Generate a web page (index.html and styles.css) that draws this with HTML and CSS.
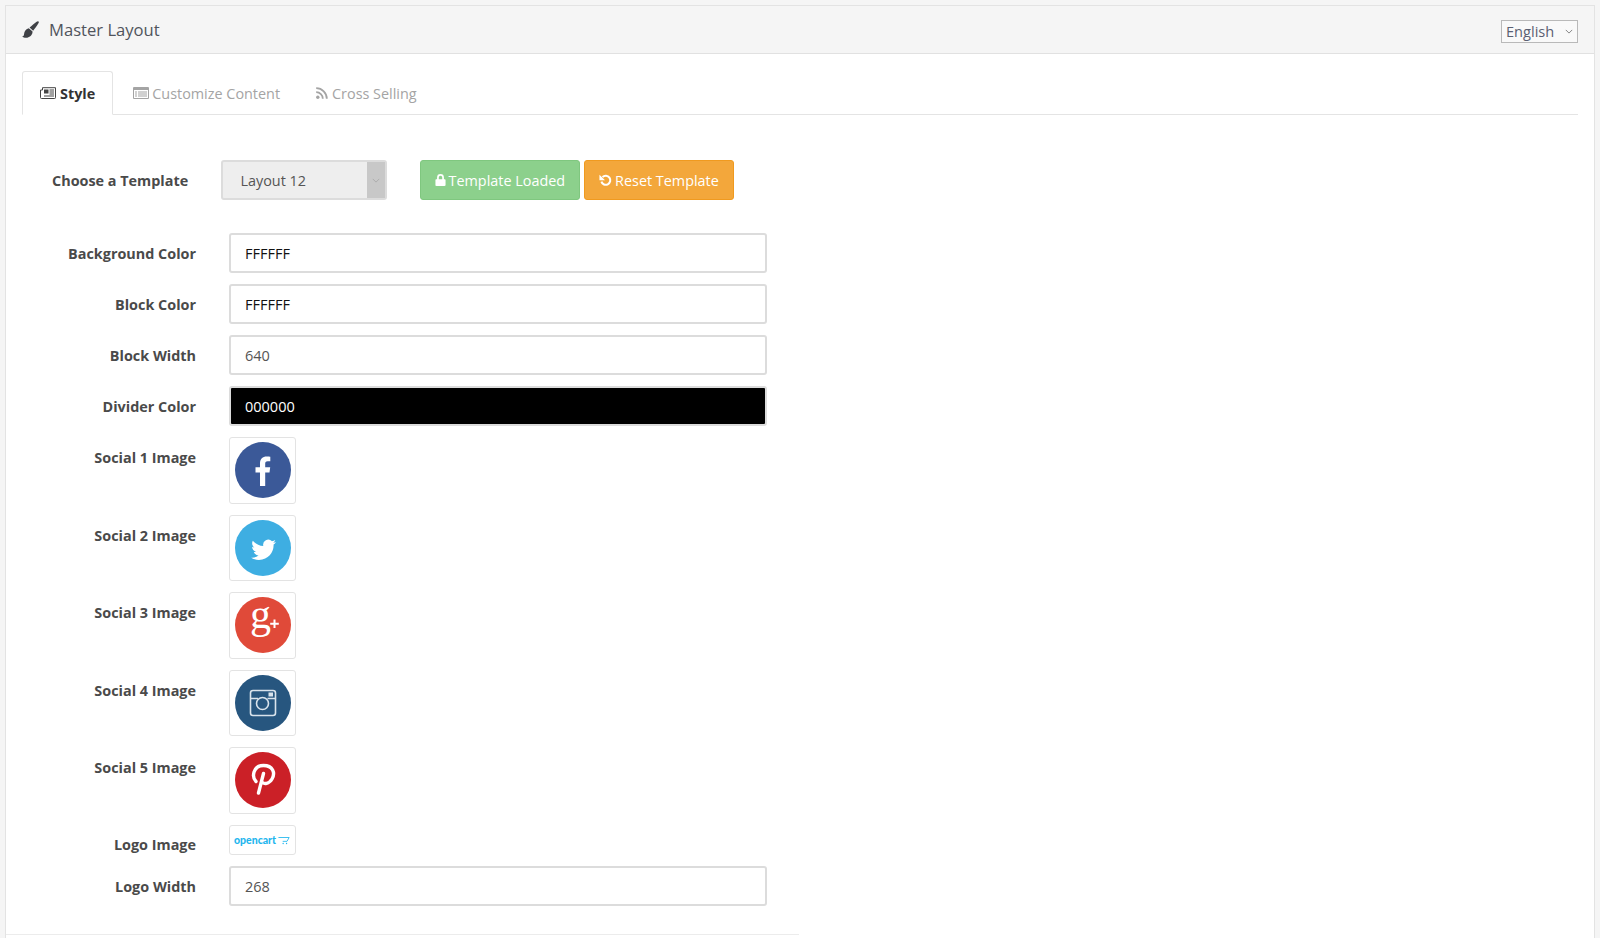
FILE: index.html
```html
<!DOCTYPE html>
<html lang="en">
<head>
<meta charset="utf-8">
<title>Master Layout</title>
<link rel="stylesheet" href="styles.css">
</head>
<body>
<div class="panel">
  <header class="panel-head">
    <h1 class="panel-title">
      <svg class="brush" viewBox="0 0 18 18"><path d="M17.500.5c.5.5.4 1.200-.1 2C15.800 5 13.500 8.500 11.800 10.300L8 7C10 5 13.500 2.200 15.500.7c.8-.5 1.500-.7 2-.2zM7.200 7.700l4 3.500c0 3.200-2.300 5.900-5.600 6.500-2 .3-4.100 0-5.500-1.200 1.500-.5 2-1.200 2.100-2.700.2-3 2.300-5.500 5-6.100z"/></svg>
      Master Layout
    </h1>
    <div class="lang">English<svg class="chev" viewBox="0 0 10 6"><path d="M1 1l4 4 4-4"/></svg></div>
  </header>
  <div class="panel-body">
    <nav class="tabs">
      <div class="tab active">
        <svg class="ti" viewBox="0 0 16 12"><path class="ol" d="M2.500.700h13v10a.800.800 0 0 1-.800.800H1.500a1 1 0 0 1-1-1V3h2z"/><path class="fl" d="M4 2.500h4.500v4H4zM9.500 2.500H14v1H9.500zM9.500 4.500H14v1H9.500zM9.500 6.500H14v1H9.500zM4 8.500h10v1H4z"/></svg>
        Style
      </div>
      <div class="tab">
        <svg class="ti" viewBox="0 0 16 12"><path class="fl" d="M1 0h14a1 1 0 0 1 1 1v10a1 1 0 0 1-1 1H1a1 1 0 0 1-1-1V1a1 1 0 0 1 1-1zm0 3v8h14V3zM2 4.500h2v1H2zM5 4.500h9v1H5zM2 6.500h2v1H2zM5 6.500h9v1H5zM2 8.500h2v1H2zM5 8.500h9v1H5z"/></svg>
        Customize Content
      </div>
      <div class="tab">
        <svg class="ti rss" viewBox="0 0 12 12"><circle class="fl" cx="1.800" cy="10.200" r="1.700"/><path class="arc" d="M.2 5.200a6.500 6.500 0 0 1 6.600 6.600M.2 1.200a10.500 10.500 0 0 1 10.600 10.600"/></svg>
        Cross Selling
      </div>
    </nav>

    <div class="template-row">
      <label class="template-label">Choose a Template</label>
      <div class="select">
        <span class="select-val">Layout 12</span>
        <span class="select-arrow"><svg class="chev" viewBox="0 0 10 6"><path d="M1 1l4 4 4-4"/></svg></span>
      </div>
      <div class="btns">
        <div class="btn green">
          <svg class="bi" viewBox="0 0 12 14"><path d="M2 6V4a4 4 0 0 1 8 0v2h.800c.600 0 1.100.500 1.100 1.100v5.800c0 .600-.500 1.100-1.100 1.100H1.200C.600 14 .100 13.500.100 12.900V7.100C.100 6.500.600 6 1.200 6zm2 0h4V4a2 2 0 0 0-4 0z"/></svg>
          Template Loaded
        </div>
        <div class="btn orange">
          <svg class="bi undo" viewBox="0 0 14 14"><path d="M2.600 8.200A4.900 4.900 0 1 0 3.800 3.300"/><path class="solid" d="M.5.800v6h6z"/></svg>
          Reset Template
        </div>
      </div>
    </div>

    <div class="fields">
      <div class="row"><label>Background Color</label><div class="input dark">FFFFFF</div></div>
      <div class="row"><label>Block Color</label><div class="input dark">FFFFFF</div></div>
      <div class="row"><label>Block Width</label><div class="input">640</div></div>
      <div class="row"><label>Divider Color</label><div class="input black">000000</div></div>

      <div class="row"><label>Social 1 Image</label>
        <div class="thumb"><svg viewBox="0 0 56 56"><circle cx="28" cy="28" r="28" fill="#3b5998"/><path fill="#fff" d="M25 44V30.500h-4.500v-5.300H25v-3.700c0-4.500 2.700-7 6.700-7 1.800 0 3.200.1 3.600.2v4.500h-2.600c-2.100 0-2.500 1-2.500 2.500v3.500h5l-.7 5.300h-4.300V44z"/></svg></div>
      </div>
      <div class="row"><label>Social 2 Image</label>
        <div class="thumb"><svg viewBox="0 0 56 56"><circle cx="28" cy="28" r="28" fill="#3eaee2"/><path transform="translate(4 5.600) scale(.88)" fill="#fff" d="M42 18.500c-1 .5-2.100.8-3.300 1 1.200-.7 2.100-1.800 2.500-3.100-1.100.7-2.400 1.100-3.700 1.400a5.800 5.800 0 0 0-9.900 5.300c-4.800-.2-9-2.500-11.900-6-1.500 2.700-.7 6 1.800 7.700-.9 0-1.800-.3-2.600-.7 0 2.800 2 5.200 4.600 5.700-.8.200-1.700.3-2.600.1.700 2.300 2.900 4 5.400 4-2.500 2-5.600 2.800-8.500 2.500 2.600 1.700 5.700 2.600 8.900 2.600 10.900 0 17-9.200 16.600-17.400 1.100-.8 2.100-1.800 2.700-3.100z"/></svg></div>
      </div>
      <div class="row"><label>Social 3 Image</label>
        <div class="thumb"><svg viewBox="0 0 56 56"><circle cx="28" cy="28" r="28" fill="#e04a39"/><text class="gplus" x="15" y="31">g</text><path fill="#fff" d="M38.500 22.500h2v3.300h3.300v2h-3.300v3.300h-2v-3.300h-3.300v-2h3.300z"/></svg></div>
      </div>
      <div class="row"><label>Social 4 Image</label>
        <div class="thumb"><svg viewBox="0 0 56 56"><circle cx="28" cy="28" r="28" fill="#27567f"/><g fill="none" stroke="#d9e3ec" stroke-width="1.600"><rect x="15.500" y="15.500" width="25" height="25" rx="2.500"/><circle cx="27.500" cy="28.500" r="6"/><path d="M16 23.500h7M32.500 23.500H40"/></g><rect x="33.500" y="17.500" width="4.500" height="4" fill="#d9e3ec"/></svg></div>
      </div>
      <div class="row"><label>Social 5 Image</label>
        <div class="thumb"><svg viewBox="0 0 56 56"><circle cx="28" cy="28" r="28" fill="#cb2027"/><path fill="none" stroke="#fff" stroke-width="3.400" stroke-linecap="round" d="M21 29.500C16.500 25 18 13.500 28.500 13.500 38 13.500 40.500 21 37 27c-3 5-8 5.500-10 3M28.500 21.500L23.500 41"/></svg></div>
      </div>
      <div class="row logo-row"><label>Logo Image</label>
        <div class="thumb logo"><span class="logo-word">opencart</span><svg class="cart" viewBox="0 0 14 9"><path d="M.5 1h12.500l-2.500 4.500H5.500"/><circle cx="6" cy="8" r=".8"/><circle cx="10" cy="8" r=".8"/></svg></div>
      </div>
      <div class="row"><label>Logo Width</label><div class="input">268</div></div>
    </div>
    <div class="foot-rule"></div>
  </div>
</div>
</body>
</html>
```

FILE: styles.css
```css
* { box-sizing: border-box; }
html, body { height: 100%; }
body {
  margin: 0;
  padding: 5px 5px 0;
  background: #f5f5f5;
  font-family: "Open Sans", "Liberation Sans", sans-serif;
  font-size: 15px;
  color: #555;
  overflow: hidden;
}
.panel {
  background: #fff;
  border: 1px solid #e3e3e3;
  border-bottom: 0;
  height: 933px;
}
.panel-head {
  height: 48px;
  background: #f5f5f5;
  border-bottom: 1px solid #e1e1e1;
  display: flex;
  align-items: center;
  justify-content: space-between;
  padding: 0 16px;
}
.panel-title {
  margin: 0;
  display: flex;
  align-items: center;
  gap: 10px;
  font-size: 16.600px;
  font-weight: 400;
  color: #50545c;
}
.brush { width: 17px; height: 17px; fill: #3f4146; }
.lang {
  width: 77px;
  height: 23px;
  margin-top: 3px;
  border: 1px solid #b9b9b9;
  background: #f9f9f9;
  display: flex;
  align-items: center;
  justify-content: space-between;
  padding: 0 4px;
  font-size: 14.600px;
  color: #5a6072;
}
.chev { width: 8px; height: 5px; fill: none; stroke: #777; stroke-width: 1.100; }
.panel-body { padding: 17px 16px 0; }
.tabs {
  display: flex;
  height: 44px;
  border-bottom: 1px solid #e4e4e4;
}
.tab {
  display: flex;
  align-items: center;
  gap: 3px;
  height: 44px;
  padding: 0 18px;
  color: #a4a4a4;
  font-size: 14.400px;
}
.tab.active {
  background: #fff;
  border: 1px solid #e4e4e4;
  border-bottom-color: #fff;
  border-radius: 3px 3px 0 0;
  color: #333;
  font-weight: 700;
  gap: 4px;
  padding: 0 16.500px 0 17px;
  margin-right: 2.500px;
}
.ti { width: 16px; height: 12px; }
.ti.rss { width: 12px; height: 12px; }
.tab:last-child { gap: 4px; }
.ti .fl { fill: #a4a4a4; }
.ti .arc { fill: none; stroke: #a4a4a4; stroke-width: 1.800; }
.tab.active .fl { fill: #444; }
.ti .ol { fill: none; stroke: #444; stroke-width: 1; }

.template-row {
  display: flex;
  align-items: center;
  margin-top: 45px;
  height: 40px;
}
.template-label {
  width: 198.500px;
  padding-left: 30px;
  font-weight: 700;
  font-size: 14.400px;
  color: #4a4a4a;
  flex: none;
}
.select {
  width: 166px;
  height: 40px;
  flex: none;
  display: flex;
  border: 2px solid #dcdcdc;
  border-radius: 3px;
  background: #eee;
  font-size: 14.400px;
  color: #555;
}
.select-val { flex: 1; padding-left: 18px; line-height: 37px; }
.select-arrow {
  width: 18px;
  background: #c8c8c8;
  display: flex;
  align-items: center;
  justify-content: center;
}
.select-arrow .chev { stroke: #aaa; }
.btns { display: flex; gap: 4px; margin-left: 33px; }
.btn {
  height: 40px;
  display: flex;
  align-items: center;
  gap: 3px;
  padding: 0 14px;
  border-radius: 3px;
  color: #fff;
  font-size: 14.400px;
  border: 1px solid;
}
.green { background: #8cd08c; border-color: #7fc77f; }
.orange { background: #f3a73b; border-color: #f09a1f; }
.bi { width: 11px; height: 12px; fill: #fff; }
.undo { width: 13px; height: 13px; fill: none; stroke: #fff; stroke-width: 2.200; }
.undo .solid { fill: #fff; stroke: none; }

.fields {
  margin-top: 33px;
  display: flex;
  flex-direction: column;
  gap: 11px;
}
.row { display: flex; align-items: flex-start; }
.row label {
  width: 174px;
  text-align: right;
  font-weight: 700;
  font-size: 14.400px;
  line-height: 20px;
  padding-top: 11px;
  color: #4a4a4a;
  flex: none;
}
.row.logo-row label { padding-top: 10px; }
.input {
  margin-left: 33px;
  width: 538px;
  height: 40px;
  border: 2px solid #dcdcdc;
  border-radius: 3px;
  padding-left: 14px;
  line-height: 37px;
  font-size: 14.500px;
  color: #555;
  background: #fff;
}
.input.dark { color: #111; }
.input.black { background: #000; color: #fff; border-color: #dcdcdc; }
.thumb {
  margin-left: 33px;
  width: 66.500px;
  height: 66.500px;
  border: 1px solid #e3e3e3;
  border-radius: 3px;
  padding: 4px 4.500px;
}
.thumb svg { display: block; width: 56px; height: 56px; overflow: visible; }
.gplus {
  font-family: "Liberation Serif", serif;
  font-size: 42px;
  fill: #fff;
}
.thumb.logo {
  height: 30.500px;
  display: flex;
  align-items: center;
  gap: 2px;
  padding: 1px 4px 0;
}
.logo-word {
  font-family: "Lato", sans-serif;
  font-weight: 900;
  font-size: 10.500px;
  color: #1fb6ee;
  line-height: 1;
}
.thumb .cart { width: 12px; height: 9px; fill: #1fb6ee; stroke: none; }
.cart path { fill: none; stroke: #1fb6ee; stroke-width: 1; }
.foot-rule {
  margin-top: 28px;
  width: 793px;
  margin-left: -16px;
  border-top: 1px solid #ececec;
}
```
